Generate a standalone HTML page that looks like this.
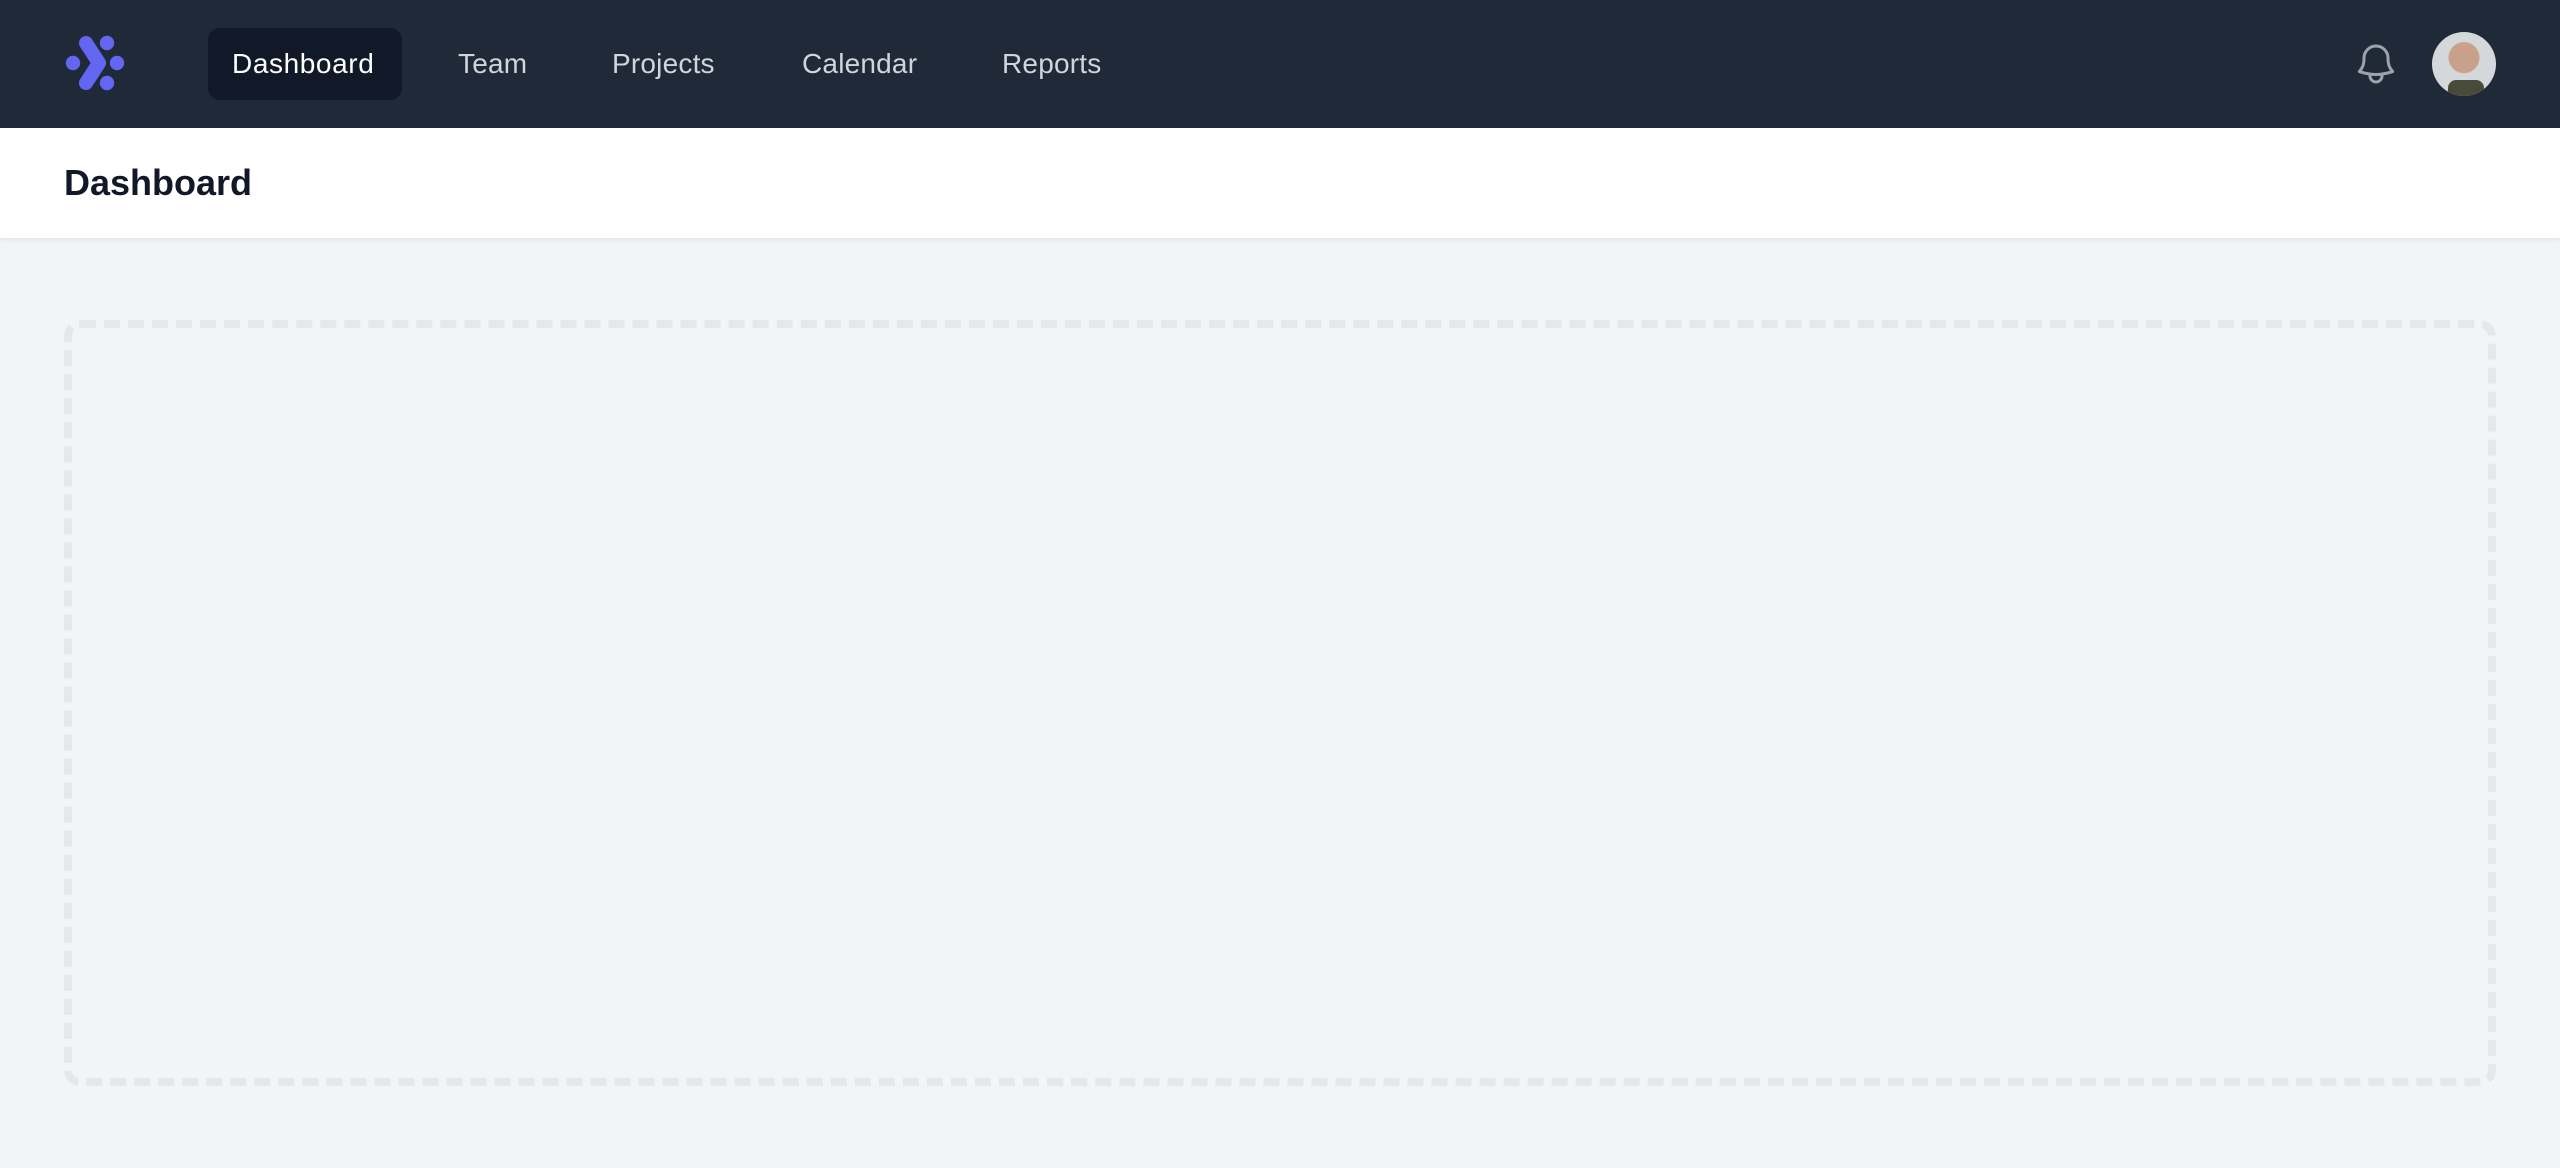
<!DOCTYPE html>
<html><head><meta charset="utf-8"><style>
html,body{margin:0;padding:0}
body{width:1280px;height:584px;zoom:2;background:#f3f4f6;font-family:"Liberation Sans",sans-serif;overflow:hidden}
nav{height:64px;background:#1f2937;position:relative}
.item{position:absolute;top:14px;height:36px;line-height:36px;font-size:14px;color:#d1d5db;padding:0 12px;border-radius:6px;letter-spacing:0.1px}
.active{background:#111827;color:#fff;padding:0 14px 0 12px;letter-spacing:0.3px}
header{height:55px;background:#fff;box-shadow:0 1px 2px rgba(0,0,0,.06);position:relative}
header h1{margin:0;position:absolute;left:32px;top:0;line-height:55px;font-size:18px;font-weight:bold;color:#111827}
.box{position:absolute;left:32px;top:160px;width:1208px;height:375px;border:4px dashed #e5e7eb;border-radius:8px}
</style></head><body>
<nav>
<svg style="position:absolute;left:0;top:0" width="80" height="64" viewBox="0 0 80 64">
<g fill="#6366f1"><circle cx="36.5" cy="31.5" r="3.6"/><circle cx="53.5" cy="21.5" r="3.6"/><circle cx="58.5" cy="31.5" r="3.6"/><circle cx="53.5" cy="41.5" r="3.6"/></g>
<path d="M43 21.5 L49.5 31.5 L43 41.5" stroke="#6366f1" stroke-width="7" fill="none" stroke-linecap="round" stroke-linejoin="round"/>
</svg>
<div class="item active" style="left:104px">Dashboard</div>
<div class="item" style="left:217px">Team</div>
<div class="item" style="left:294px">Projects</div>
<div class="item" style="left:389px">Calendar</div>
<div class="item" style="left:489px">Reports</div>
<svg style="position:absolute;left:1176px;top:20px" width="24" height="24" viewBox="0 0 24 24" fill="none" stroke="#9ca3af" stroke-width="1.5" stroke-linecap="round" stroke-linejoin="round"><path d="M14.857 17.082a23.848 23.848 0 005.454-1.31A8.967 8.967 0 0118 9.75V9A6 6 0 006 9v.75a8.967 8.967 0 01-2.312 6.022c1.733.64 3.56 1.085 5.455 1.31m5.714 0a24.255 24.255 0 01-5.714 0m5.714 0a3 3 0 11-5.714 0"/></svg>
<div style="position:absolute;left:1216px;top:16px;width:32px;height:32px;border-radius:50%;background:radial-gradient(circle at 50% 40%,#c9a08a 0 30%,#d5d8da 32%);overflow:hidden"><div style="position:absolute;left:8px;top:24px;width:18px;height:10px;background:#4a4a3a;border-radius:4px"></div></div>
</nav>
<header><h1>Dashboard</h1></header>
<div class="box"></div>
</body></html>
